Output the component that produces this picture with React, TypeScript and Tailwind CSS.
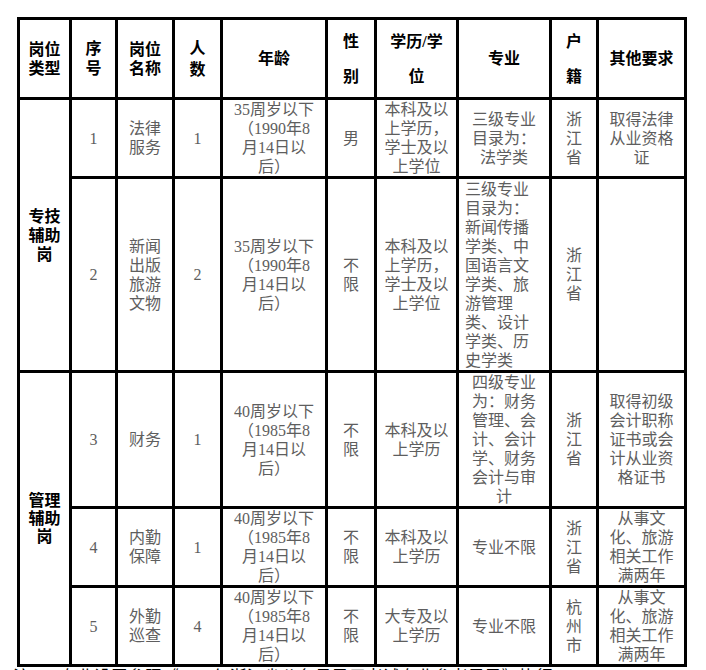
import React from "react";

const FONT = "font-['Liberation_Serif','Noto_Sans_CJK_SC',serif]";

type Cell = {
  lines: string[];
  rowSpan?: number;
  head?: boolean;
  left?: boolean;
  lh?: string;
};

function Td({ c }: { c: Cell }) {
  const base =
    "border-[3px] border-black align-middle whitespace-nowrap p-0 text-[16px] " +
    (c.left ? "text-left pl-[6px] " : "text-center ") +
    (c.head ? "font-bold text-black " : "text-[#5e5e5e] ") +
    (c.lh ?? "leading-[19px]");
  return (
    <td rowSpan={c.rowSpan} className={base}>
      {c.lines.map((l, i) => (
        <React.Fragment key={i}>
          {i > 0 && <br />}
          {l}
        </React.Fragment>
      ))}
    </td>
  );
}

const age35 = ["35周岁以下", "（1990年8", "月14日以", "后）"];
const age40 = ["40周岁以下", "（1985年8", "月14日以", "后）"];
const zj = ["浙", "江", "省"];
const buxian = ["不", "限"];
const bk = ["本科及以", "上学历"];
const bkxw = ["本科及以", "上学历，", "学士及以", "上学位"];
const wenhua = ["从事文", "化、旅游", "相关工作", "满两年"];

const rows: { h: string; cells: Cell[] }[] = [
  {
    h: "h-[79px]",
    cells: [
      { lines: ["专技", "辅助", "岗"], rowSpan: 2, head: true, lh: "leading-[19px]" },
      { lines: ["1"] },
      { lines: ["法律", "服务"] },
      { lines: ["1"] },
      { lines: age35 },
      { lines: ["男"] },
      { lines: bkxw },
      { lines: ["三级专业", "目录为：", "法学类"] },
      { lines: zj },
      { lines: ["取得法律", "从业资格", "证"] },
    ],
  },
  {
    h: "h-[194px]",
    cells: [
      { lines: ["2"] },
      { lines: ["新闻", "出版", "旅游", "文物"] },
      { lines: ["2"] },
      { lines: age35 },
      { lines: buxian },
      { lines: bkxw },
      {
        lines: [
          "三级专业",
          "目录为：",
          "新闻传播",
          "学类、中",
          "国语言文",
          "学类、旅",
          "游管理",
          "类、设计",
          "学类、历",
          "史学类",
        ],
        left: true,
      },
      { lines: zj },
      { lines: [""] },
    ],
  },
  {
    h: "h-[136px]",
    cells: [
      { lines: ["管理", "辅助", "岗"], rowSpan: 3, head: true, lh: "leading-[18px]" },
      { lines: ["3"] },
      { lines: ["财务"] },
      { lines: ["1"] },
      { lines: age40 },
      { lines: buxian },
      { lines: bk },
      { lines: ["四级专业", "为：财务", "管理、会", "计、会计", "学、财务", "会计与审", "计"] },
      { lines: zj },
      { lines: ["取得初级", "会计职称", "证书或会", "计从业资", "格证书"] },
    ],
  },
  {
    h: "h-[78px]",
    cells: [
      { lines: ["4"] },
      { lines: ["内勤", "保障"] },
      { lines: ["1"] },
      { lines: age40 },
      { lines: buxian },
      { lines: bk },
      { lines: ["专业不限"] },
      { lines: zj },
      { lines: wenhua },
    ],
  },
  {
    h: "h-[78px]",
    cells: [
      { lines: ["5"] },
      { lines: ["外勤", "巡查"] },
      { lines: ["4"] },
      { lines: age40 },
      { lines: buxian },
      { lines: ["大专及以", "上学历"] },
      { lines: ["专业不限"] },
      { lines: ["杭", "州", "市"] },
      { lines: wenhua },
    ],
  },
];

const header: Cell[] = [
  { lines: ["岗位", "类型"], head: true, lh: "leading-[19px]" },
  { lines: ["序", "号"], head: true, lh: "leading-[20px]" },
  { lines: ["岗位", "名称"], head: true, lh: "leading-[19px]" },
  { lines: ["人", "数"], head: true, lh: "leading-[22px]" },
  { lines: ["年龄"], head: true },
  { lines: ["性", "别"], head: true, lh: "leading-[35px]" },
  { lines: ["学历/学", "位"], head: true, lh: "leading-[35px]" },
  { lines: ["专业"], head: true },
  { lines: ["户", "籍"], head: true, lh: "leading-[35px]" },
  { lines: ["其他要求"], head: true },
];

const widths = ["w-[52px]", "w-[46px]", "w-[57px]", "w-[48px]", "w-[105px]", "w-[49px]", "w-[82px]", "w-[93px]", "w-[47px]", "w-[88px]"];

export default function App() {
  return (
    <div className={`w-[706px] h-[670px] overflow-hidden bg-white ${FONT}`}>
      <div className="pt-[17px] pl-[17px]">
        <table className="border-collapse table-fixed w-[670px]">
          <colgroup>
            {widths.map((w, i) => (
              <col key={i} className={w} />
            ))}
          </colgroup>
          <tbody>
            <tr className="h-[80px]">
              {header.map((c, i) => (
                <Td key={i} c={c} />
              ))}
            </tr>
            {rows.map((r, ri) => (
              <tr key={ri} className={r.h}>
                {r.cells.map((c, i) => (
                  <Td key={i} c={c} />
                ))}
              </tr>
            ))}
          </tbody>
        </table>
        <div className="-ml-[4px] text-[17px] leading-[22px] text-black whitespace-nowrap">
          注：1.专业设置参照《2019年浙江省公务员录用考试专业参考目录》执行。
        </div>
      </div>
    </div>
  );
}
